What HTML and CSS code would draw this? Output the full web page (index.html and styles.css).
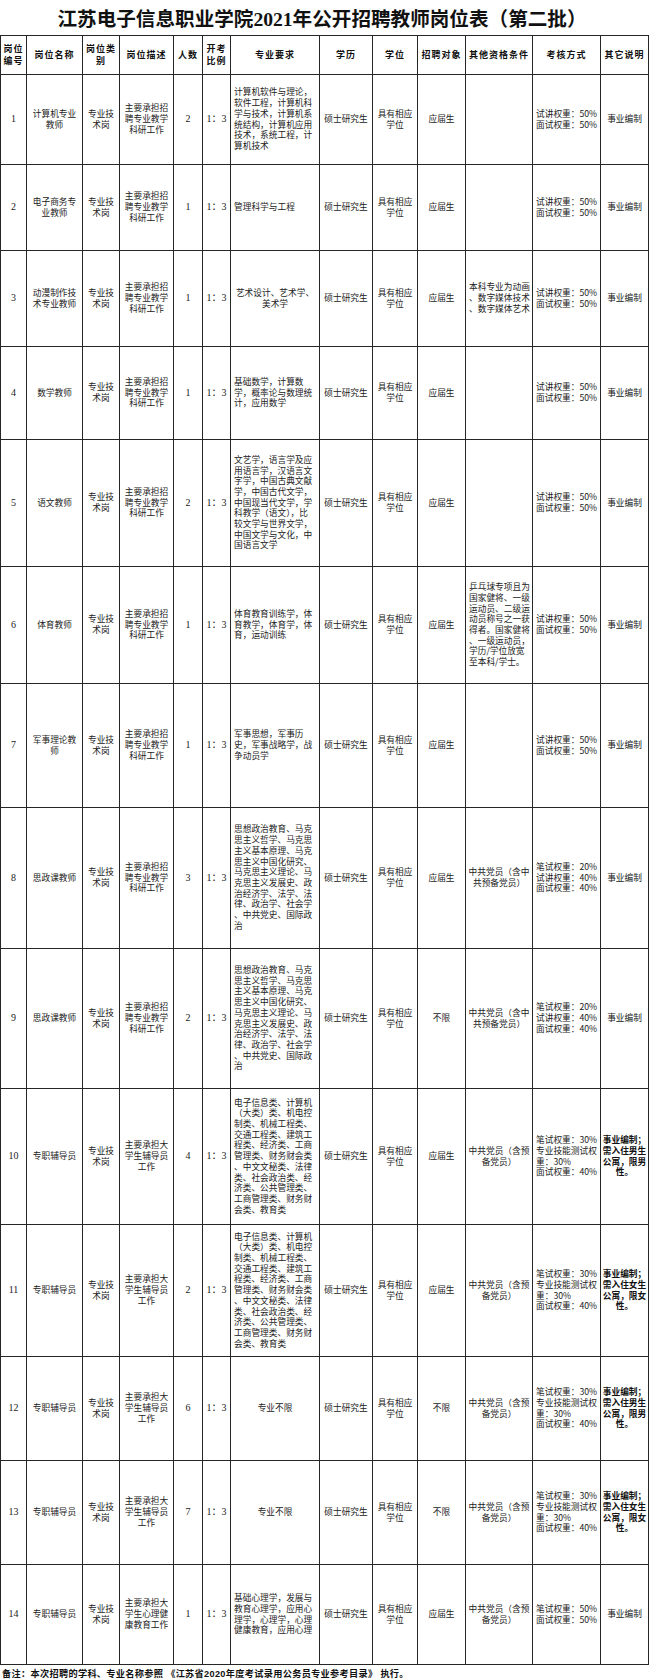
FILE: index.html
```html
<!DOCTYPE html>
<html lang="zh-CN">
<head>
<meta charset="utf-8">
<title>江苏电子信息职业学院2021年公开招聘教师岗位表（第二批）</title>
<link rel="stylesheet" href="styles.css">
</head>
<body>
<div class="sheet">
  <div class="title">江苏电子信息职业学院2021年公开招聘教师岗位表（第二批）</div>
  <table class="grid">
    <colgroup>
      <col class="c-no"><col class="c-name"><col class="c-type"><col class="c-desc"><col class="c-cnt"><col class="c-ratio"><col class="c-major"><col class="c-edu"><col class="c-deg"><col class="c-target"><col class="c-other"><col class="c-exam"><col class="c-note">
    </colgroup>
    <thead>
      <tr class="h-head">
        <th>岗位<br>编号</th><th>岗位名称</th><th>岗位类<br>别</th><th>岗位描述</th><th>人数</th><th>开考<br>比例</th><th>专业要求</th><th>学历</th><th>学位</th><th>招聘对象</th><th>其他资格条件</th><th>考核方式</th><th>其它说明</th>
      </tr>
    </thead>
    <tbody>
      <tr class="h-1">
        <td class="num">1</td><td>计算机专业<br>教师</td><td>专业技<br>术岗</td><td>主要承担招<br>聘专业教学<br>科研工作</td><td class="num">2</td><td class="num">1：3</td>
        <td class="left">计算机软件与理论，<br>软件工程，计算机科<br>学与技术，计算机系<br>统结构，计算机应用<br>技术，系统工程，计<br>算机技术</td>
        <td>硕士研究生</td><td>具有相应<br>学位</td><td>应届生</td><td></td><td class="left">试讲权重：50%<br>面试权重：50%</td><td>事业编制</td>
      </tr>
      <tr class="h-2">
        <td class="num">2</td><td>电子商务专<br>业教师</td><td>专业技<br>术岗</td><td>主要承担招<br>聘专业教学<br>科研工作</td><td class="num">1</td><td class="num">1：3</td>
        <td class="left">管理科学与工程</td>
        <td>硕士研究生</td><td>具有相应<br>学位</td><td>应届生</td><td></td><td class="left">试讲权重：50%<br>面试权重：50%</td><td>事业编制</td>
      </tr>
      <tr class="h-3">
        <td class="num">3</td><td>动漫制作技<br>术专业教师</td><td>专业技<br>术岗</td><td>主要承担招<br>聘专业教学<br>科研工作</td><td class="num">1</td><td class="num">1：3</td>
        <td>艺术设计、艺术学、<br>美术学</td>
        <td>硕士研究生</td><td>具有相应<br>学位</td><td>应届生</td><td class="left">本科专业为动画<br>、数字媒体技术<br>、数字媒体艺术</td><td class="left">试讲权重：50%<br>面试权重：50%</td><td>事业编制</td>
      </tr>
      <tr class="h-4">
        <td class="num">4</td><td>数学教师</td><td>专业技<br>术岗</td><td>主要承担招<br>聘专业教学<br>科研工作</td><td class="num">1</td><td class="num">1：3</td>
        <td class="left">基础数学，计算数<br>学，概率论与数理统<br>计，应用数学</td>
        <td>硕士研究生</td><td>具有相应<br>学位</td><td>应届生</td><td></td><td class="left">试讲权重：50%<br>面试权重：50%</td><td>事业编制</td>
      </tr>
      <tr class="h-5">
        <td class="num">5</td><td>语文教师</td><td>专业技<br>术岗</td><td>主要承担招<br>聘专业教学<br>科研工作</td><td class="num">2</td><td class="num">1：3</td>
        <td class="left">文艺学，语言学及应<br>用语言学，汉语言文<br>字学，中国古典文献<br>学，中国古代文学，<br>中国现当代文学，学<br>科教学（语文），比<br>较文学与世界文学，<br>中国文学与文化，中<br>国语言文学</td>
        <td>硕士研究生</td><td>具有相应<br>学位</td><td>应届生</td><td></td><td class="left">试讲权重：50%<br>面试权重：50%</td><td>事业编制</td>
      </tr>
      <tr class="h-6">
        <td class="num">6</td><td>体育教师</td><td>专业技<br>术岗</td><td>主要承担招<br>聘专业教学<br>科研工作</td><td class="num">1</td><td class="num">1：3</td>
        <td class="left">体育教育训练学，体<br>育教学，体育学，体<br>育，运动训练</td>
        <td>硕士研究生</td><td>具有相应<br>学位</td><td>应届生</td><td class="left">乒乓球专项且为<br>国家健将、一级<br>运动员、二级运<br>动员称号之一获<br>得者。国家健将<br>、一级运动员，<br>学历/学位放宽<br>至本科/学士。</td><td class="left">试讲权重：50%<br>面试权重：50%</td><td>事业编制</td>
      </tr>
      <tr class="h-7">
        <td class="num">7</td><td>军事理论教<br>师</td><td>专业技<br>术岗</td><td>主要承担招<br>聘专业教学<br>科研工作</td><td class="num">1</td><td class="num">1：3</td>
        <td class="left">军事思想，军事历<br>史，军事战略学，战<br>争动员学</td>
        <td>硕士研究生</td><td>具有相应<br>学位</td><td>应届生</td><td></td><td class="left">试讲权重：50%<br>面试权重：50%</td><td>事业编制</td>
      </tr>
      <tr class="h-8">
        <td class="num">8</td><td>思政课教师</td><td>专业技<br>术岗</td><td>主要承担招<br>聘专业教学<br>科研工作</td><td class="num">3</td><td class="num">1：3</td>
        <td class="left">思想政治教育、马克<br>思主义哲学、马克思<br>主义基本原理、马克<br>思主义中国化研究、<br>马克思主义理论、马<br>克思主义发展史、政<br>治经济学、法学、法<br>律、政治学、社会学<br>、中共党史、国际政<br>治</td>
        <td>硕士研究生</td><td>具有相应<br>学位</td><td>应届生</td><td>中共党员（含中<br>共预备党员）</td><td class="left">笔试权重：20%<br>试讲权重：40%<br>面试权重：40%</td><td>事业编制</td>
      </tr>
      <tr class="h-9">
        <td class="num">9</td><td>思政课教师</td><td>专业技<br>术岗</td><td>主要承担招<br>聘专业教学<br>科研工作</td><td class="num">2</td><td class="num">1：3</td>
        <td class="left">思想政治教育、马克<br>思主义哲学、马克思<br>主义基本原理、马克<br>思主义中国化研究、<br>马克思主义理论、马<br>克思主义发展史、政<br>治经济学、法学、法<br>律、政治学、社会学<br>、中共党史、国际政<br>治</td>
        <td>硕士研究生</td><td>具有相应<br>学位</td><td>不限</td><td>中共党员（含中<br>共预备党员）</td><td class="left">笔试权重：20%<br>试讲权重：40%<br>面试权重：40%</td><td>事业编制</td>
      </tr>
      <tr class="h-10">
        <td class="num">10</td><td>专职辅导员</td><td>专业技<br>术岗</td><td>主要承担大<br>学生辅导员<br>工作</td><td class="num">4</td><td class="num">1：3</td>
        <td class="left">电子信息类、计算机<br>（大类）类、机电控<br>制类、机械工程类、<br>交通工程类、建筑工<br>程类、经济类、工商<br>管理类、财务财会类<br>、中文文秘类、法律<br>类、社会政治类、经<br>济类、公共管理类、<br>工商管理类、财务财<br>会类、教育类</td>
        <td>硕士研究生</td><td>具有相应<br>学位</td><td>应届生</td><td>中共党员（含预<br>备党员）</td><td class="left">笔试权重：30%<br>专业技能测试权<br>重：30%<br>面试权重：40%</td><td class="strong">事业编制；<br>需入住男生<br>公寓，限男<br>性。</td>
      </tr>
      <tr class="h-11">
        <td class="num">11</td><td>专职辅导员</td><td>专业技<br>术岗</td><td>主要承担大<br>学生辅导员<br>工作</td><td class="num">2</td><td class="num">1：3</td>
        <td class="left">电子信息类、计算机<br>（大类）类、机电控<br>制类、机械工程类、<br>交通工程类、建筑工<br>程类、经济类、工商<br>管理类、财务财会类<br>、中文文秘类、法律<br>类、社会政治类、经<br>济类、公共管理类、<br>工商管理类、财务财<br>会类、教育类</td>
        <td>硕士研究生</td><td>具有相应<br>学位</td><td>应届生</td><td>中共党员（含预<br>备党员）</td><td class="left">笔试权重：30%<br>专业技能测试权<br>重：30%<br>面试权重：40%</td><td class="strong">事业编制；<br>需入住女生<br>公寓，限女<br>性。</td>
      </tr>
      <tr class="h-12">
        <td class="num">12</td><td>专职辅导员</td><td>专业技<br>术岗</td><td>主要承担大<br>学生辅导员<br>工作</td><td class="num">6</td><td class="num">1：3</td>
        <td>专业不限</td>
        <td>硕士研究生</td><td>具有相应<br>学位</td><td>不限</td><td>中共党员（含预<br>备党员）</td><td class="left">笔试权重：30%<br>专业技能测试权<br>重：30%<br>面试权重：40%</td><td class="strong">事业编制；<br>需入住男生<br>公寓，限男<br>性。</td>
      </tr>
      <tr class="h-13">
        <td class="num">13</td><td>专职辅导员</td><td>专业技<br>术岗</td><td>主要承担大<br>学生辅导员<br>工作</td><td class="num">7</td><td class="num">1：3</td>
        <td>专业不限</td>
        <td>硕士研究生</td><td>具有相应<br>学位</td><td>不限</td><td>中共党员（含预<br>备党员）</td><td class="left">笔试权重：30%<br>专业技能测试权<br>重：30%<br>面试权重：40%</td><td class="strong">事业编制；<br>需入住女生<br>公寓，限女<br>性。</td>
      </tr>
      <tr class="h-14">
        <td class="num">14</td><td>专职辅导员</td><td>专业技<br>术岗</td><td>主要承担大<br>学生心理健<br>康教育工作</td><td class="num">1</td><td class="num">1：3</td>
        <td class="left">基础心理学，发展与<br>教育心理学，应用心<br>理学，心理学，心理<br>健康教育，应用心理</td>
        <td>硕士研究生</td><td>具有相应<br>学位</td><td>应届生</td><td>中共党员（含预<br>备党员）</td><td class="left">笔试权重：50%<br>面试权重：50%</td><td>事业编制</td>
      </tr>
    </tbody>
  </table>
  <div class="footnote">备注：本次招聘的学科、专业名称参照 《江苏省2020年度考试录用公务员专业参考目录》 执行。</div>
</div>
</body>
</html>
```

FILE: styles.css
```css
* { box-sizing: border-box; }

body {
  margin: 0;
  background: #ffffff;
  color: #222222;
  font-family: "Noto Sans CJK SC", "Liberation Sans", sans-serif;
}

.sheet {
  width: 650px;
}

.title {
  height: 35px;
  display: flex;
  align-items: center;
  justify-content: center;
  padding-right: 6px;
  font-family: "Liberation Serif", "Noto Sans CJK SC", serif;
  font-size: 19.6px;
  font-weight: bold;
  color: #111111;
}

.grid {
  border-collapse: collapse;
  table-layout: fixed;
  width: 648px;
}

.c-no { width: 26px; }
.c-name { width: 56px; }
.c-type { width: 37px; }
.c-desc { width: 54px; }
.c-cnt { width: 29px; }
.c-ratio { width: 28px; }
.c-major { width: 89px; }
.c-edu { width: 53px; }
.c-deg { width: 45px; }
.c-target { width: 48px; }
.c-other { width: 67px; }
.c-exam { width: 68px; }
.c-note { width: 48px; }

.grid th,
.grid td {
  border: 1px solid #262626;
  padding: 0 2px;
  text-align: center;
  vertical-align: middle;
  white-space: nowrap;
  overflow: hidden;
  font-size: 8.7px;
  line-height: 10.7px;
  font-weight: normal;
}

.grid th {
  font-weight: bold;
  font-size: 9px;
  line-height: 12px;
  letter-spacing: 1px;
  color: #111111;
  padding: 0;
}

.grid td.left {
  text-align: left;
  padding-left: 3px;
}

.grid td.num {
  font-family: "Liberation Serif", "Noto Sans CJK SC", serif;
  font-size: 10px;
}

.grid td.strong {
  font-weight: 600;
  padding: 0 1px;
  color: #111111;
}

.h-head { height: 39px; }
.h-1 { height: 90px; }
.h-2 { height: 86px; }
.h-3 { height: 96px; }
.h-4 { height: 93px; }
.h-5 { height: 127px; }
.h-6 { height: 117px; }
.h-7 { height: 124px; }
.h-8 { height: 141px; }
.h-9 { height: 140px; }
.h-10 { height: 136px; }
.h-11 { height: 132px; }
.h-12 { height: 104px; }
.h-13 { height: 104px; }
.h-14 { height: 100px; }

.footnote {
  height: 15px;
  padding-left: 2px;
  display: flex;
  align-items: center;
  font-size: 9.2px;
  font-weight: bold;
  letter-spacing: 0.3px;
  color: #111111;
  white-space: nowrap;
  font-family: "Liberation Sans", "Noto Sans CJK SC", sans-serif;
}
```
